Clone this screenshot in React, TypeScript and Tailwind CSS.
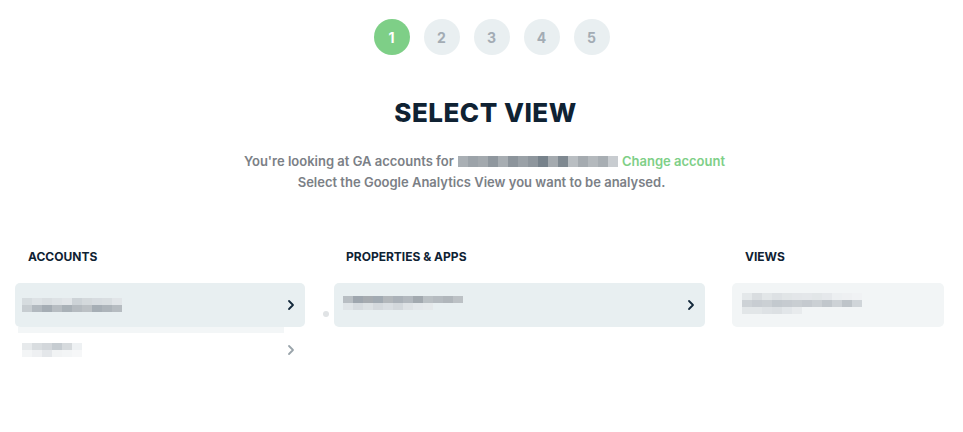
import React from 'react';

const font = { fontFamily: 'Inter, "Noto Sans", sans-serif' };

const Chevron = ({ light = false }: { light?: boolean }) => (
    <svg width="8" height="12" viewBox="0 0 8 12" className={light ? 'text-[#9aa4ab]' : 'text-[#13283a]'}>
        <polyline points="2,2 6,6 2,10" fill="none" stroke="currentColor" strokeWidth="1.8" strokeLinecap="round" strokeLinejoin="round" />
    </svg>
);

// pixelated placeholder for blurred text
const Pixels = ({ rows, cell = 10, h = 7 }: { rows: string[][]; cell?: number; h?: number }) => (
    <div className="flex flex-col">
        {rows.map((r, i) => (
            <div key={i} className="flex">
                {r.map((c, j) => (
                    <div key={j} style={{ width: cell, height: h, background: c }} />
                ))}
            </div>
        ))}
    </div>
);

const steps = [1, 2, 3, 4, 5];

export default function App() {
    return (
        <div className="w-[963px] h-[432px] bg-white overflow-hidden" style={font}>
            <div className="flex justify-center gap-[14px] pt-[19px] pl-[20px]">
                {steps.map((s) => (
                    <div
                        key={s}
                        className={
                            s === 1
                                ? 'w-[36px] h-[36px] rounded-full bg-[#7ecf87] text-white flex items-center justify-center text-[14px] font-bold'
                                : 'w-[36px] h-[36px] rounded-full bg-[#e9eff1] text-[#a3acb4] flex items-center justify-center text-[14px] font-bold'
                        }
                    >
                        {s}
                    </div>
                ))}
            </div>

            <h1 className="mt-[40px] text-center text-[26px] leading-[36px] font-extrabold tracking-[0.5px] text-[#0f2233] pl-[8px]">
                SELECT VIEW
            </h1>

            <div className="mt-[20px] text-center text-[13px] leading-[21px] font-semibold text-[#7b8086]">
                <div className="flex justify-center items-center gap-[4px] pl-[6px]">
                    <span>You're looking at GA accounts for</span>
                    <Pixels
                        cell={10}
                        h={11}
                        rows={[['#a9afb4', '#9ca3a9', '#a3a9ae', '#8f979e', '#a7adb2', '#8c949b', '#9aa1a7', '#8e969d', '#77828b', '#a4aaaf', '#7f8991', '#b9bec2', '#a5abb0', '#b4b9bd', '#a8aeb3', '#c8ccd0']]}
                    />
                    <span className="text-[#7ecf87]">Change account</span>
                </div>
                <div>Select the Google Analytics View you want to be analysed.</div>
            </div>

            <div className="mt-[56px] pl-[15px] flex">
                <div className="w-[290px]">
                    <div className="pl-[13px] text-[12px] font-bold text-[#0f2233] leading-[16px]">ACCOUNTS</div>
                    <div className="mt-[18px] h-[44px] rounded-[5px] bg-[#e8eff1] flex items-center justify-between pl-[7px] pr-[10px]">
                        <Pixels
                            rows={[
                                ['#d6dcdf', '#dde2e5', '#d9dee1', '#dde2e5', '#e1e5e8', '#cdd3d7', '#d4d9dc', '#d7dce0', '#d9dee1', '#e1e5e8'],
                                ['#c7cdd1', '#b2b9bf', '#a5adb4', '#b7bdc2', '#a9b1b7', '#b5bbc0', '#bcc1c5', '#a6aeb5', '#adb4ba', '#b6bcc1'],
                            ]}
                        />
                        <Chevron />
                    </div>
                    <div className="ml-[3px] mr-[21px] h-[6px] bg-[#f3f6f7]" />
                    <div className="mt-[6px] h-[22px] flex items-center justify-between pl-[7px] pr-[10px]">
                        <Pixels
                            rows={[
                                ['#e7eaec', '#d9dde0', '#d3d7db', '#c6ccd1', '#d6dadd', '#eef1f3'],
                                ['#f3f5f6', '#eef0f2', '#e4e7ea', '#f1f3f4', '#f3f5f6', '#f6f7f8'],
                            ]}
                        />
                        <Chevron light />
                    </div>
                </div>

                <div className="relative w-[371px] ml-[29px]">
                    <div className="pl-[12px] text-[12px] font-bold text-[#0f2233] leading-[16px]">PROPERTIES &amp; APPS</div>
                    <div className="mt-[18px] h-[44px] rounded-[5px] bg-[#e8eff1] flex items-center justify-between pl-[9px] pr-[10px]">
                        <div className="-mt-[4px]">
                            <Pixels
                                rows={[
                                    ['#b8bec3', '#9ea6ae', '#a6abb0', '#a1aab2', '#b2b7bb', '#aab1b8', '#b2b8be', '#a2a9af', '#bac0c4', '#b5bbc0', '#b0b6bb', '#bcc1c5'],
                                    ['#dfe4e7', '#d6dbdf', '#dce1e4', '#d4d9dd', '#d9dee2', '#d3d8dc', '#dee2e5', '#e3e7ea', '#e5e9eb'],
                                ]}
                            />
                        </div>
                        <Chevron />
                    </div>
                    <div className="absolute left-[-11px] top-[62px] w-[6px] h-[6px] rounded-full bg-[#e0e3e5]" />
                </div>

                <div className="w-[212px] ml-[27px]">
                    <div className="pl-[13px] text-[12px] font-bold text-[#0f2233] leading-[16px]">VIEWS</div>
                    <div className="mt-[18px] h-[44px] rounded-[5px] bg-[#f2f5f6] flex items-center pl-[10px]">
                        <div className="-mt-[4px]">
                            <Pixels
                                rows={[
                                    ['#e4e8ea', '#d9dde0', '#e2e6e8', '#dde1e4', '#e1e5e7', '#e3e6e9', '#e4e7ea', '#e2e6e8', '#e5e8eb', '#eceff1', '#eef0f2', '#f0f2f4'],
                                    ['#cdd2d6', '#c8cdd2', '#cbd0d4', '#c3c9ce', '#c6cbd0', '#c9ced2', '#c5cacf', '#cbd0d4', '#c1c7cc', '#cdd2d6', '#bec4c9', '#d0d5d9'],
                                    ['#e2e6e8', '#e2e6e8', '#dee2e5', '#dce0e3', '#e2e6e9', '#e8ebed'],
                                ]}
                            />
                        </div>
                    </div>
                </div>
            </div>
        </div>
    );
}
